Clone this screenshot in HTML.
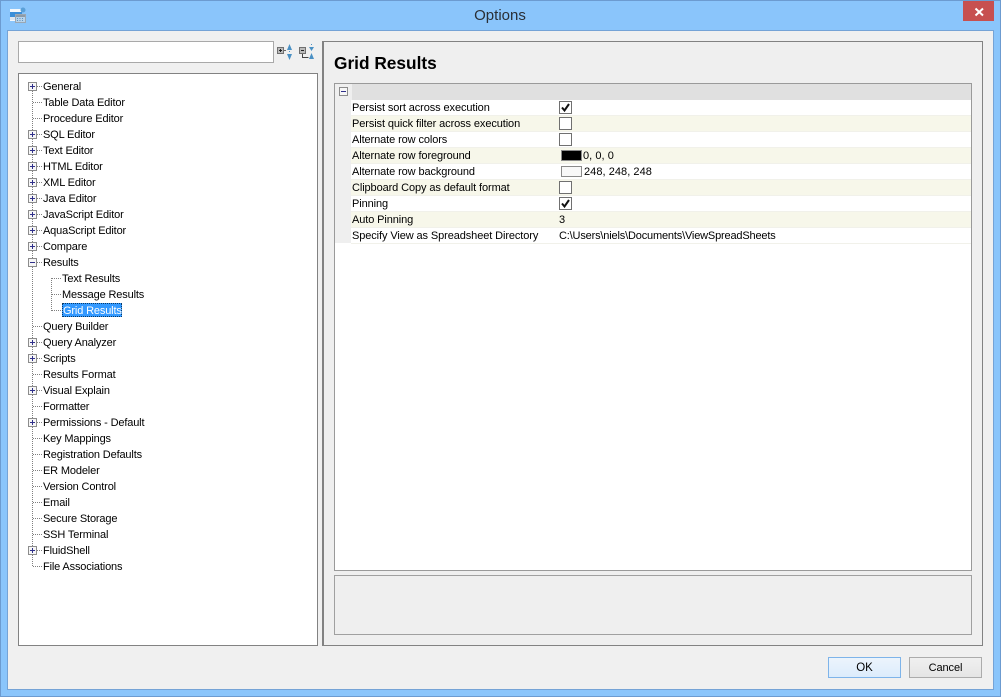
<!DOCTYPE html>
<html><head><meta charset="utf-8"><title>Options</title>
<style>
html,body{margin:0;padding:0}
body{width:1001px;height:697px;position:relative;overflow:hidden;background:#8ac5fb;font:11px/16px "Liberation Sans",sans-serif;color:#000}
div,span,svg{position:absolute;box-sizing:border-box}
.t{left:43px;height:16px;white-space:nowrap;letter-spacing:-.15px;color:#000}
.t2{left:62px}
.r{left:351px;width:620px;height:16px;background:#fff;border-bottom:1px solid #f1f1ea}
.a{background:#f7f7ea}
.l{left:352px;height:16px;white-space:nowrap;letter-spacing:-.1px;color:#000}
.v{left:559px;height:16px;white-space:nowrap;letter-spacing:.05px;color:#000}
.c{left:559px;width:13px;height:13px;background:#fff;border:1px solid #707070}
.btn{top:657px;width:73px;height:21px;text-align:center;line-height:20px;font-size:11.5px;letter-spacing:-.1px}
</style></head>
<body>
<div style="left:0;top:0;width:1001px;height:697px;border:1px solid #6c9bd0"></div>
<svg style="left:9px;top:6px" width="18" height="18" viewBox="0 0 18 18">
<path d="M1 3h12v12H1z" fill="#f4f8fc"/><path d="M1 6h12v5H1z" fill="#3c8fd8"/><path d="M1 11h12v3H1z" fill="#dfe6ee"/>
<circle cx="14" cy="4" r="2.500" fill="#5aa0d8"/>
<path d="M6.500 8.500h10v8h-10z" fill="#b7d3ea" stroke="#9aa7b3"/><path d="M7 9h9v2H7z" fill="#8d9aa6"/>
<path d="M8 12h1v1H8zM10.500 12h1v1h-1zM13 12h1v1h-1zM8 14h1v1H8zM10.500 14h1v1h-1zM13 14h1v1h-1z" fill="#5f93c2"/>
</svg>
<div style="left:400px;top:6px;width:200px;text-align:center;font-size:15px;line-height:20px;color:#2a2f36">Options</div>
<div style="left:963px;top:1px;width:31px;height:20px;background:#c75050"></div>
<svg style="left:974px;top:7px" width="11" height="10" viewBox="0 0 11 10"><path d="M1.500 1.500L9 8.500M9 1.500L1.500 8.500" stroke="#fff" stroke-width="2"/></svg>
<div style="left:7px;top:30px;width:987px;height:660px;background:#f0f0f0;border:1px solid #75a3d6"></div>

<div style="left:18px;top:41px;width:256px;height:22px;background:#fff;border:1px solid #a9a9a9"></div>
<svg style="left:276px;top:43px" width="42" height="18" viewBox="0 0 42 18" shape-rendering="crispEdges">
<path d="M1.500 4.500h6v6h-6z" fill="#bbb" stroke="#707070"/><path d="M3 7.500h3M4.500 6v3" stroke="#222"/>
<path d="M8 7.500h2" stroke="#666"/>
<path d="M11 7l2.500-6 2.500 6zM11 11l2.500 6 2.500-6z" fill="#4a90c4" shape-rendering="auto"/><path d="M13.500 8v1" stroke="#4a90c4"/>
<path d="M23.500 4.500h6v6h-6z" fill="#bbb" stroke="#707070"/><path d="M25 7.500h3" stroke="#222"/>
<path d="M26.500 11v3.500h6" fill="none" stroke="#444"/>
<path d="M35.500 1v1" stroke="#4a90c4"/><path d="M33 4h5l-2.500 4zM33 16h5l-2.500-6z" fill="#4a90c4" shape-rendering="auto"/>
</svg>

<div style="left:18px;top:73px;width:300px;height:573px;background:#fff;border:1px solid #828282"></div>
<svg style="left:18px;top:73px" width="120" height="510" shape-rendering="crispEdges">
<g fill="none" stroke="#808080" stroke-width="1" stroke-dasharray="1 1">
<path d="M14.500 18v476"/>
<path d="M33.500 205v33"/>
<path d="M19 13.500h6M15 29.500h10M15 45.500h10M19 61.500h6M19 77.500h6M19 93.500h6M19 109.500h6M19 125.500h6M19 141.500h6M19 157.500h6M19 173.500h6M19 189.500h6M34 205.500h10M34 221.500h10M34 237.500h10M15 253.500h10M19 269.500h6M19 285.500h6M15 301.500h10M19 317.500h6M15 333.500h10M19 349.500h6M15 365.500h10M15 381.500h10M15 397.500h10M15 413.500h10M15 429.500h10M15 445.500h10M15 461.500h10M19 477.500h6M15 493.500h10"/>
</g>
<g fill="#f6f6f6" stroke="#8c8c8c">
<path d="M10.500 9.500h8v8h-8zM10.500 57.500h8v8h-8zM10.500 73.500h8v8h-8zM10.500 89.500h8v8h-8zM10.500 105.500h8v8h-8zM10.500 121.500h8v8h-8zM10.500 137.500h8v8h-8zM10.500 153.500h8v8h-8zM10.500 169.500h8v8h-8zM10.500 185.500h8v8h-8zM10.500 265.500h8v8h-8zM10.500 281.500h8v8h-8zM10.500 313.500h8v8h-8zM10.500 345.500h8v8h-8zM10.500 473.500h8v8h-8z"/>
</g>
<g stroke="#30308a">
<path d="M12 13.500h5M14.500 11v5M12 61.500h5M14.500 59v5M12 77.500h5M14.500 75v5M12 93.500h5M14.500 91v5M12 109.500h5M14.500 107v5M12 125.500h5M14.500 123v5M12 141.500h5M14.500 139v5M12 157.500h5M14.500 155v5M12 173.500h5M14.500 171v5M12 189.500h5M12 269.500h5M14.500 267v5M12 285.500h5M14.500 283v5M12 317.500h5M14.500 315v5M12 349.500h5M14.500 347v5M12 477.500h5M14.500 475v5" fill="none"/>
</g>
</svg>
<div class="t" style="top:79px">General</div>
<div class="t" style="top:95px">Table Data Editor</div>
<div class="t" style="top:111px">Procedure Editor</div>
<div class="t" style="top:127px">SQL Editor</div>
<div class="t" style="top:143px">Text Editor</div>
<div class="t" style="top:159px">HTML Editor</div>
<div class="t" style="top:175px">XML Editor</div>
<div class="t" style="top:191px">Java Editor</div>
<div class="t" style="top:207px">JavaScript Editor</div>
<div class="t" style="top:223px">AquaScript Editor</div>
<div class="t" style="top:239px">Compare</div>
<div class="t" style="top:255px">Results</div>
<div class="t t2" style="top:271px">Text Results</div>
<div class="t t2" style="top:287px">Message Results</div>
<div style="left:62px;top:303px;width:60px;height:14px;background:#3399ff;border:1px dotted #0a3a66"></div>
<div class="t t2" style="top:303px;left:63px;color:#fff">Grid Results</div>
<div class="t" style="top:319px">Query Builder</div>
<div class="t" style="top:335px">Query Analyzer</div>
<div class="t" style="top:351px">Scripts</div>
<div class="t" style="top:367px">Results Format</div>
<div class="t" style="top:383px">Visual Explain</div>
<div class="t" style="top:399px">Formatter</div>
<div class="t" style="top:415px">Permissions - Default</div>
<div class="t" style="top:431px">Key Mappings</div>
<div class="t" style="top:447px">Registration Defaults</div>
<div class="t" style="top:463px">ER Modeler</div>
<div class="t" style="top:479px">Version Control</div>
<div class="t" style="top:495px">Email</div>
<div class="t" style="top:511px">Secure Storage</div>
<div class="t" style="top:527px">SSH Terminal</div>
<div class="t" style="top:543px">FluidShell</div>
<div class="t" style="top:559px">File Associations</div>

<div style="left:322px;top:41px;width:661px;height:605px;background:#efefef;border:1px solid #828282;border-left-width:2px"></div>
<div style="left:334px;top:52px;font:bold 17.300px/22px 'Liberation Sans',sans-serif;color:#000;white-space:nowrap">Grid Results</div>

<div style="left:334px;top:83px;width:638px;height:488px;background:#fff;border:1px solid #9a9a9a"></div>
<div style="left:335px;top:84px;width:17px;height:159px;background:#efefef"></div>
<div style="left:352px;top:84px;width:619px;height:16px;background:#e0e0e0"></div>
<svg style="left:339px;top:87px" width="9" height="9" shape-rendering="crispEdges"><path d="M.5.500h8v8h-8z" fill="#f6f6f6" stroke="#8c8c8c"/><path d="M2 4.500h5" stroke="#30308a"/></svg>

<div class="r" style="top:100px"></div>
<div class="r a" style="top:116px"></div>
<div class="r" style="top:132px"></div>
<div class="r a" style="top:148px"></div>
<div class="r" style="top:164px"></div>
<div class="r a" style="top:180px"></div>
<div class="r" style="top:196px"></div>
<div class="r a" style="top:212px"></div>
<div class="r" style="top:228px"></div>
<div class="l" style="top:100px">Persist sort across execution</div>
<div class="l" style="top:116px">Persist quick filter across execution</div>
<div class="l" style="top:132px">Alternate row colors</div>
<div class="l" style="top:148px">Alternate row foreground</div>
<div class="l" style="top:164px">Alternate row background</div>
<div class="l" style="top:180px">Clipboard Copy as default format</div>
<div class="l" style="top:196px">Pinning</div>
<div class="l" style="top:212px">Auto Pinning</div>
<div class="l" style="top:228px">Specify View as Spreadsheet Directory</div>

<div class="c" style="top:101px"></div>
<svg style="left:559px;top:101px" width="13" height="13"><path d="M3 6.500L5.500 9.500L10 3" fill="none" stroke="#111" stroke-width="2"/></svg>
<div class="c" style="top:117px"></div>
<div class="c" style="top:133px"></div>
<div style="left:561px;top:150px;width:21px;height:11px;background:#000;border:1px solid #8a8a8a"></div>
<div class="v" style="left:583px;top:148px">0, 0, 0</div>
<div style="left:561px;top:166px;width:21px;height:11px;background:#f8f8f8;border:1px solid #8a8a8a"></div>
<div class="v" style="left:584px;top:164px">248, 248, 248</div>
<div class="c" style="top:181px"></div>
<div class="c" style="top:197px"></div>
<svg style="left:559px;top:197px" width="13" height="13"><path d="M3 6.500L5.500 9.500L10 3" fill="none" stroke="#111" stroke-width="2"/></svg>
<div class="v" style="top:212px">3</div>
<div class="v" style="top:228px;letter-spacing:-.17px">C:\Users\niels\Documents\ViewSpreadSheets</div>

<div style="left:334px;top:575px;width:638px;height:60px;background:#efefef;border:1px solid #a0a0a0"></div>

<div class="btn" style="left:828px;background:linear-gradient(#ecf4fc,#dcecfc);border:1px solid #7eb4ea">OK</div>
<div class="btn" style="left:909px;background:linear-gradient(#f0f0f0,#e5e5e5);border:1px solid #acacac;font-size:11px">Cancel</div>
</body></html>
